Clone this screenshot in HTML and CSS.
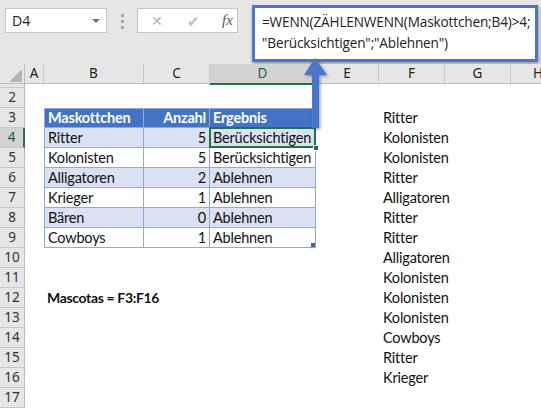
FILE: index.html
```html
<!DOCTYPE html>
<html>
<head>
<meta charset="utf-8">
<link rel="stylesheet" href="styles.css">
</head>
<body>
<div class="app">
  <div class="topbar">
    <div class="namebox"><span>D4</span><span class="caret"></span></div>
    <div class="dots"><i></i><i></i><i></i></div>
    <div class="fbtns">
      <span class="btn x">&#x2715;</span>
      <span class="btn ok">&#x2714;</span>
      <span class="btn fx">fx</span>
    </div>
    <div class="fbox">
      <div class="fline">=WENN(ZÄHLENWENN(Maskottchen;B4)&gt;4;</div>
      <div class="fline">"Berücksichtigen";"Ablehnen")</div>
    </div>
  </div>

  <div class="sheet">
    <div class="row colhead">
      <div class="corner"><span class="tri"></span></div>
      <div class="ch">A</div><div class="ch">B</div><div class="ch">C</div>
      <div class="ch sel">D</div><div class="ch">E</div><div class="ch">F</div>
      <div class="ch">G</div><div class="ch last">H</div>
    </div>
    <div class="row r1"><div class="rh"></div></div>
    <div class="row"><div class="rh">2</div></div>
    <div class="row">
      <div class="rh">3</div>
      <div class="cell b th">Maskottchen</div>
      <div class="cell c th num">Anzahl</div>
      <div class="cell d th d3">Ergebnis</div>
      <div class="cell f">Ritter</div>
    </div>
    <div class="row">
      <div class="rh sel">4</div>
      <div class="cell b band">Ritter</div>
      <div class="cell c band num">5</div>
      <div class="cell d band active">Berücksichtigen<span class="handle"></span></div>
      <div class="cell f">Kolonisten</div>
    </div>
    <div class="row">
      <div class="rh">5</div>
      <div class="cell b">Kolonisten</div>
      <div class="cell c num">5</div>
      <div class="cell d">Berücksichtigen</div>
      <div class="cell f">Kolonisten</div>
    </div>
    <div class="row">
      <div class="rh">6</div>
      <div class="cell b band">Alligatoren</div>
      <div class="cell c band num">2</div>
      <div class="cell d band">Ablehnen</div>
      <div class="cell f">Ritter</div>
    </div>
    <div class="row">
      <div class="rh">7</div>
      <div class="cell b">Krieger</div>
      <div class="cell c num">1</div>
      <div class="cell d">Ablehnen</div>
      <div class="cell f">Alligatoren</div>
    </div>
    <div class="row">
      <div class="rh">8</div>
      <div class="cell b band">Bären</div>
      <div class="cell c band num">0</div>
      <div class="cell d band">Ablehnen</div>
      <div class="cell f">Ritter</div>
    </div>
    <div class="row">
      <div class="rh">9</div>
      <div class="cell b">Cowboys</div>
      <div class="cell c num">1</div>
      <div class="cell d lastcell">Ablehnen<span class="resize"></span></div>
      <div class="cell f">Ritter</div>
    </div>
    <div class="row"><div class="rh">10</div><div class="cell f">Alligatoren</div></div>
    <div class="row"><div class="rh">11</div><div class="cell f">Kolonisten</div></div>
    <div class="row"><div class="rh">12</div><div class="cell b bold wide">Mascotas = F3:F16</div><div class="cell f">Kolonisten</div></div>
    <div class="row"><div class="rh">13</div><div class="cell f">Kolonisten</div></div>
    <div class="row"><div class="rh">14</div><div class="cell f">Cowboys</div></div>
    <div class="row"><div class="rh">15</div><div class="cell f">Ritter</div></div>
    <div class="row"><div class="rh">16</div><div class="cell f">Krieger</div></div>
    <div class="row"><div class="rh">17</div></div>
  </div>

  <svg class="arrow" width="40" height="80" viewBox="0 0 40 80">
    <defs>
      <filter id="sh" x="-50%" y="-20%" width="200%" height="150%">
        <feDropShadow dx="1.5" dy="1.5" stdDeviation="1.5" flood-color="#000" flood-opacity="0.35"/>
      </filter>
    </defs>
    <path d="M15 3 L27 20 L19 20 L19 73 L12 73 L12 20 L4 20 Z" fill="#4a76c8" filter="url(#sh)"/>
  </svg>
</div>
</body>
</html>
```

FILE: styles.css
```css
* { box-sizing: border-box; }
html, body { margin: 0; padding: 0; }
body { width: 541px; height: 409px; overflow: hidden; background: #fff; }
.app { position: relative; width: 541px; height: 409px; overflow: hidden; font-family: "Noto Sans", "Open Sans", sans-serif; }

.topbar {
  height: 64px;
  background: #e6e6e6;
  display: flex;
  align-items: flex-start;
}
.namebox {
  margin: 8px 0 0 5px;
  width: 102px;
  height: 25px;
  background: #fff;
  border: 1px solid #c6c6c6;
  display: flex;
  align-items: center;
  justify-content: space-between;
  padding: 0 6px 0 6px;
  font-family: "Open Sans", sans-serif;
  font-size: 14px;
  color: #222;
}
.caret {
  width: 0; height: 0;
  border-left: 4px solid transparent;
  border-right: 4px solid transparent;
  border-top: 4px solid #777;
}
.dots {
  margin: 14px 0 0 14px;
  width: 3px;
  display: flex;
  flex-direction: column;
  gap: 3px;
}
.dots i { display: block; width: 3px; height: 3px; background: #a8a8a8; }
.fbtns {
  margin: 8px 0 0 13px;
  width: 101px;
  height: 25px;
  background: #fff;
  border: 1px solid #c6c6c6;
  display: flex;
  align-items: center;
  padding-left: 12px;
  gap: 0;
}
.btn { display: inline-block; text-align: center; }
.btn.x { width: 14px; color: #b3b3b3; font-size: 14px; }
.btn.ok { width: 14px; margin-left: 22px; color: #c0c0c0; font-size: 15px; }
.btn.fx { margin-left: 22px; font-family: "Liberation Serif", serif; font-style: italic; font-size: 15px; color: #555; }
.fbox {
  margin: 5px 0 0 14px;
  width: 286px;
  height: 57px;
  background: #fff;
  border: 3px solid #4a76c8;
  box-shadow: 1px 2px 4px rgba(0,0,0,0.35);
  padding: 3px 0 0 7px;
  font-family: "Open Sans", sans-serif;
  font-size: 13.6px;
  letter-spacing: -0.15px;
  color: #222;
}
.fline { line-height: 21px; height: 21px; white-space: nowrap; }

.sheet { display: flex; flex-direction: column; }
.row {
  display: grid;
  grid-template-columns: 25px 19px 100px 66px 106px 63px 66px 66px 30px;
  height: 20px;
}
.row.r1 { height: 4px; }
.colhead { height: 20px; background: #e6e6e6; border-bottom: 1px solid #bdbdbd; }
.corner { position: relative; border-right: 1px solid #bdbdbd; }
.tri {
  position: absolute; right: 2px; bottom: 3px;
  width: 0; height: 0;
  border-left: 13px solid transparent;
  border-bottom: 13px solid #b4b4b4;
}
.ch {
  border-right: 1px solid #c8c8c8;
  text-align: center;
  font-size: 13.5px;
  line-height: 19px;
  color: #222;
}
.ch.sel { background: #d2d2d2; border-bottom: 2px solid #217346; color: #1d5f3a; }
.ch.last { border-right: none; text-align: left; padding-left: 22px; }
.rh {
  grid-column: 1;
  background: #e6e6e6;
  border-right: 1px solid #bdbdbd;
  border-bottom: 1px solid #c8c8c8;
  text-align: center;
  font-size: 13.5px;
  line-height: 19px;
  color: #333;
}
.r1 .rh { border-bottom: 1px solid #c8c8c8; }
.rh.sel { background: #d2d2d2; border-right: 2px solid #217346; color: #1d5f3a; }

.cell {
  font-family: "Lato", "Open Sans", sans-serif;
  font-size: 14.5px;
  letter-spacing: -0.2px;
  line-height: 19px;
  color: #111;
  padding: 0 3px;
  white-space: nowrap;
}
.cell.b { grid-column: 3; border-left: 1px solid #8ea9db; }
.cell.c { grid-column: 4; }
.cell.d { grid-column: 5; }
.cell.f { grid-column: 7; padding-left: 4px; }
.cell.b, .cell.c, .cell.d { border-right: 1px solid #8ea9db; border-bottom: 1px solid #8ea9db; }
.cell.num { text-align: right; }
.cell.th { background: #4472c4; color: #fff; font-weight: bold; border-top: 1px solid #8ea9db; line-height: 18px; }
.cell.th.d3 { border-right: 2px solid #217346; }
.cell.band { background: #d9e1f2; }
.cell.wide { grid-column: 3 / span 3; border: none; font-weight: bold; font-size: 14px; letter-spacing: -0.35px; }
.cell.active { position: relative; }
.cell.active::after {
  content: "";
  position: absolute;
  left: -1px; top: -1px; right: -1px; bottom: -1px;
  border: 2px solid #217346;
}
.handle {
  position: absolute;
  right: -4px; bottom: -4px;
  width: 6px; height: 6px;
  background: #217346;
  border: 1px solid #fff;
  z-index: 2;
}
.cell.lastcell { position: relative; }
.resize {
  position: absolute;
  right: 0; bottom: 0;
  width: 4px; height: 4px;
  background: #3f5fb0;
}

.arrow { position: absolute; left: 300px; top: 55px; }
```
